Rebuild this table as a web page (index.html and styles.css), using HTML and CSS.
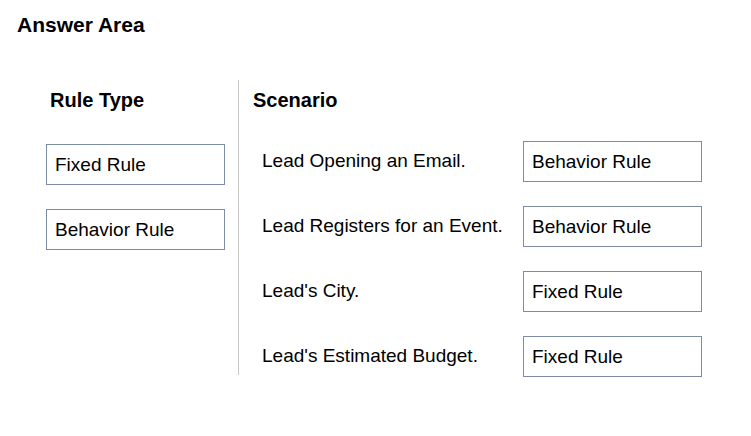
FILE: index.html
```html
<!DOCTYPE html>
<html>
<head>
<meta charset="utf-8">
<link rel="stylesheet" href="styles.css">
</head>
<body>
<h1 class="title">Answer Area</h1>
<div class="area">
  <div class="col-left">
    <h2 class="col-head">Rule Type</h2>
    <div class="choices">
      <div class="box">Fixed Rule</div>
      <div class="box">Behavior Rule</div>
    </div>
  </div>
  <div class="col-right">
    <h2 class="col-head">Scenario</h2>
    <div class="rows">
      <div class="row"><span class="label">Lead Opening an Email.</span><div class="box">Behavior Rule</div></div>
      <div class="row"><span class="label">Lead Registers for an Event.</span><div class="box">Behavior Rule</div></div>
      <div class="row"><span class="label">Lead's City.</span><div class="box">Fixed Rule</div></div>
      <div class="row"><span class="label">Lead's Estimated Budget.</span><div class="box">Fixed Rule</div></div>
    </div>
  </div>
</div>
</body>
</html>
```

FILE: styles.css
```css
html, body {
  margin: 0;
  padding: 0;
  background: #ffffff;
}
body {
  font-family: "Liberation Sans", Arial, sans-serif;
  color: #000;
  width: 751px;
  height: 436px;
}
.title {
  margin: 0;
  padding: 13px 0 0 17px;
  font-size: 21px;
  line-height: 24px;
  font-weight: bold;
}
.area {
  display: flex;
  margin-top: 43px;
  padding-left: 46px;
}
.col-left {
  width: 192px;
  height: 295px;
  border-right: 1px solid #c8c8c8;
}
.col-head {
  margin: 0;
  padding-top: 8px;
  font-size: 20px;
  line-height: 24px;
  font-weight: bold;
}
.col-left .col-head {
  padding-left: 4px;
}
.choices {
  display: flex;
  flex-direction: column;
  gap: 24px;
  margin-top: 32px;
}
.box {
  box-sizing: border-box;
  width: 179px;
  height: 41px;
  border: 1px solid #7b8ca3;
  padding: 1px 0 0 8px;
  display: flex;
  align-items: center;
  font-size: 19px;
}
.col-right {
  padding-left: 14px;
}
.rows {
  display: flex;
  flex-direction: column;
  gap: 24px;
  margin-top: 29px;
}
.row {
  display: flex;
  align-items: center;
  padding-left: 9px;
}
.label {
  width: 261px;
  font-size: 19px;
  margin-bottom: 2px;
}
```
